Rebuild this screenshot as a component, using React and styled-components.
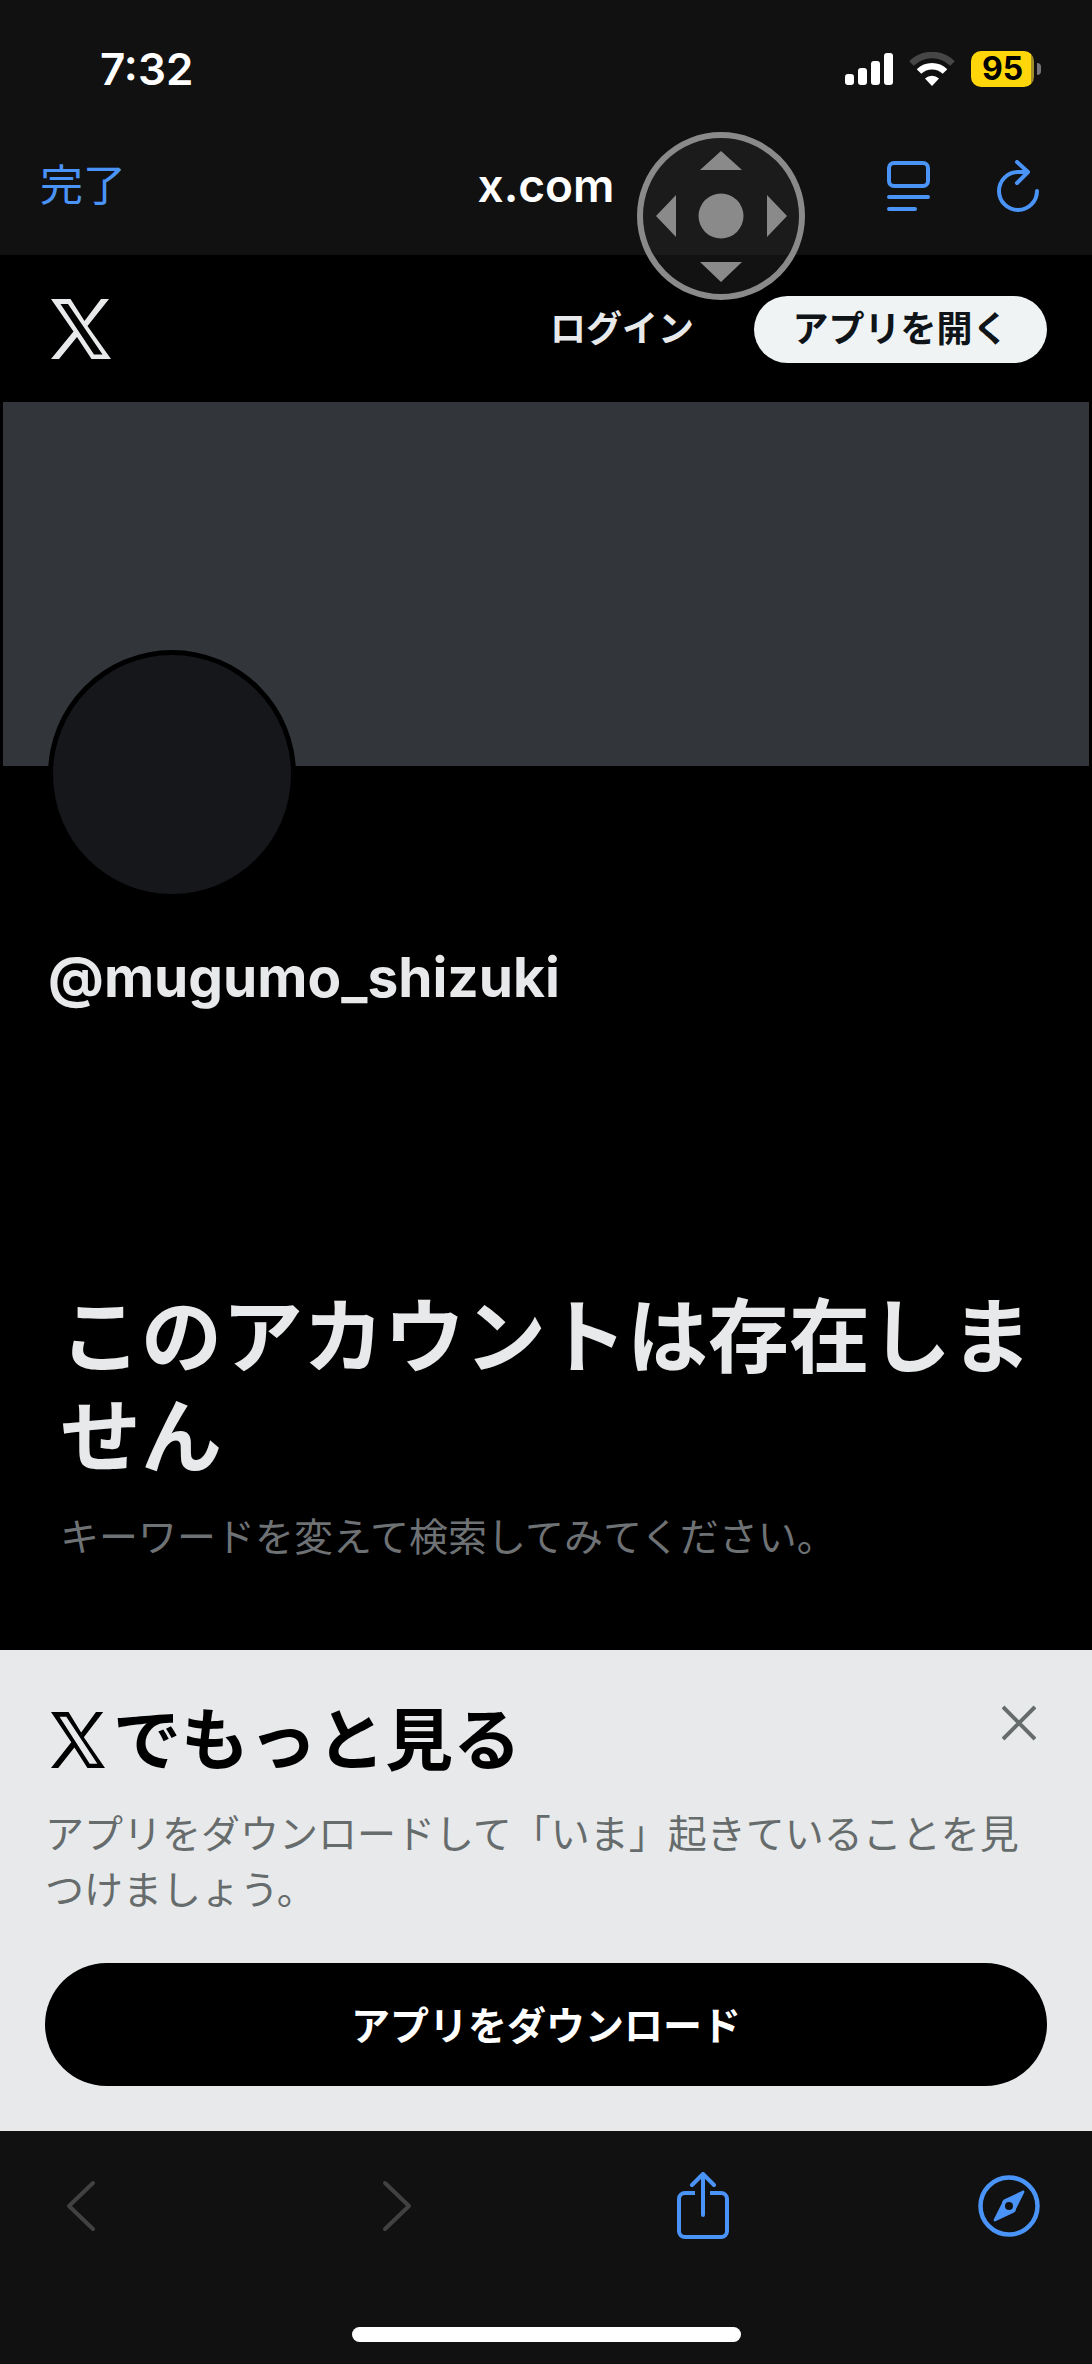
import React from 'react';
import styled, { createGlobalStyle } from 'styled-components';

const GlobalStyle = createGlobalStyle`
  * {
    box-sizing: border-box;
  }

  body {
    margin: 0;
    background: #000;
    font-family: Inter, 'Noto Sans CJK JP', sans-serif;
  }

  button {
    padding: 0;
    border: 0;
    background: none;
    color: inherit;
    font: inherit;
    cursor: pointer;
  }

  h1, h2, p {
    margin: 0;
  }

  svg {
    display: block;
  }
`;

const Screen = styled.div`
  position: relative;
  display: flex;
  flex-direction: column;
  min-height: 100vh;
  background: #000;
  color: #e7e9ea;
`;

// BROWSER TOP
const BrowserTop = styled.div`
  background: #111;
  color: #fff;
`;

const StatusBar = styled.div`
  display: flex;
  align-items: center;
  justify-content: space-between;
  height: 138px;
  padding: 0 51px 0 100px;
`;

const Clock = styled.time`
  font-size: 44px;
  font-weight: 600;
  line-height: 56px;
`;

const StatusIcons = styled.div`
  display: flex;
  align-items: center;
  gap: 16px;
`;

const Battery = styled.div`
  display: flex;
  align-items: center;
  gap: 3px;

  &::after {
    content: '';
    width: 4px;
    height: 12px;
    border-radius: 0 4px 4px 0;
    background: #77777a;
  }
`;

const BatteryLevel = styled.div`
  width: 63px;
  height: 36px;
  border-radius: 10px;
  background: linear-gradient(to right, #ffd60a 96%, #a08d2c 96%);
  color: #000;
  font-size: 32px;
  font-weight: 700;
  line-height: 36px;
  text-align: center;
`;

const AddressBar = styled.div`
  display: grid;
  grid-template-columns: 1fr auto 1fr;
  align-items: center;
  height: 117px;
  padding: 0 40px 24px;
`;

const DoneButton = styled.button`
  justify-self: start;
  color: #4a94f8;
  font-size: 43px;
  line-height: 56px;
`;

const Address = styled.span`
  font-size: 46px;
  font-weight: 600;
  line-height: 56px;
`;

const AddressTools = styled.div`
  display: flex;
  justify-content: flex-end;
  gap: 67px;
  padding: 2px 13px 0 0;
  color: #4a94f8;
`;

const JoystickButton = styled.button`
  position: absolute;
  top: 132px;
  left: 66%;
  transform: translateX(-50%);
`;

// X HEADER
const XHeader = styled.header`
  display: flex;
  align-items: center;
  justify-content: space-between;
  height: 147px;
  padding: 1px 45px 0 51px;
`;

const HeaderActions = styled.div`
  display: flex;
  align-items: center;
  gap: 60px;
  font-size: 36px;
  font-weight: 600;
  line-height: 56px;
`;

const OpenAppButton = styled.button`
  width: 293px;
  height: 67px;
  border-radius: 34px;
  background: #eff3f4;
  color: #0f1419;
`;

// PROFILE
const Banner = styled.div`
  height: 364px;
  margin: 0 3px;
  background: #323539;
`;

const Profile = styled.section`
  padding: 0 48px;
`;

const Avatar = styled.div`
  width: 248px;
  height: 249px;
  margin-top: -116px;
  border: 5px solid #000;
  border-radius: 50%;
  background: #16171a;
`;

const Handle = styled.h1`
  margin-top: 44px;
  font-size: 55px;
  font-weight: 700;
  line-height: 68px;
`;

const EmptyState = styled.section`
  flex: 1;
  padding: 276px 48px 80px 60px;
`;

const EmptyTitle = styled.h2`
  font-size: 81px;
  font-weight: 700;
  line-height: 100px;
`;

const EmptyText = styled.p`
  margin-top: 22px;
  color: #6e7275;
  font-size: 39px;
  line-height: 56px;
`;

// DOWNLOAD SHEET
const Sheet = styled.section`
  padding: 48px 45px 45px;
  background: #e7e9ea;
  color: #000;
`;

const SheetTop = styled.div`
  display: flex;
  align-items: flex-start;
  justify-content: space-between;
  padding: 0 11px 0 6px;
`;

const SheetTitle = styled.h2`
  display: flex;
  align-items: center;
  gap: 8px;
  font-size: 68px;
  font-weight: 600;
  line-height: 84px;
`;

const CloseButton = styled.button`
  margin-top: 7px;
  color: #666b6c;
`;

const SheetText = styled.p`
  margin-top: 24px;
  color: #666b6c;
  font-size: 39px;
  line-height: 56px;
`;

const DownloadButton = styled.button`
  width: 100%;
  height: 123px;
  margin-top: 45px;
  padding-bottom: 4px;
  border-radius: 62px;
  background: #000;
  color: #fff;
  font-size: 39px;
  font-weight: 600;
`;

// BROWSER BOTTOM
const BrowserBottom = styled.nav`
  display: flex;
  flex-direction: column;
  align-items: center;
  justify-content: space-between;
  height: 233px;
  padding: 41px 0 22px;
  background: #111;
`;

const BottomTools = styled.div`
  display: grid;
  grid-template-columns: 31fr 30fr 30fr auto;
  align-items: center;
  width: 100%;
  padding: 0 52px 0 50px;
  color: #4a94f8;
`;

const ToolButton = styled.button`
  display: flex;
  justify-content: center;

  ${BottomTools} & {
    width: 62px;
  }

  &:disabled {
    color: #414141;
    cursor: default;
  }
`;

const HomeIndicator = styled.div`
  width: 389px;
  height: 15px;
  border-radius: 8px;
  background: #fff;
`;

// ICONS
const XLogo = ({ width, height }) => (
  <svg width={width} height={height} viewBox="0 0 60 60" preserveAspectRatio="none" fill="currentColor" aria-label="X" role="img">
    <path fillRule="evenodd" d="M0 0h19.5L33.5 22 50 0h8L36.5 27 60 60H40.5L26 38 8 60H0l22.5-27.5zM9.5 5L43 55.5h8.5L17 5z" />
  </svg>
);

const SignalIcon = () => (
  <svg width="48" height="32" viewBox="0 0 48 32" fill="#fff">
    <rect x="0" y="21" width="9" height="11" rx="3" />
    <rect x="13" y="15" width="9" height="17" rx="3" />
    <rect x="26" y="8" width="9" height="24" rx="3" />
    <rect x="39" y="0" width="9" height="32" rx="3" />
  </svg>
);

const WifiIcon = () => (
  <svg width="46" height="34" viewBox="0 0 46 34" fill="none">
    <path d="M2.5 11.5a29 29 0 0 1 41 0" stroke="#464646" strokeWidth="6.5" />
    <path d="M10 19.5a18.5 18.5 0 0 1 26 0" stroke="#fff" strokeWidth="6.5" />
    <path d="M16 26.5a10 10 0 0 1 14 0L23 34z" fill="#fff" />
  </svg>
);

const ReaderIcon = () => (
  <svg width="44" height="52" viewBox="0 0 44 52" fill="none" stroke="currentColor" strokeWidth="4" strokeLinecap="round">
    <rect x="3" y="3" width="39" height="23" rx="5" />
    <path d="M3 37h39M3 49h26" />
  </svg>
);

const ReloadIcon = () => (
  <svg width="42" height="52" viewBox="0 0 42 52" fill="none" stroke="currentColor" strokeWidth="4" strokeLinecap="round" strokeLinejoin="round">
    <path d="M40 31a19 19 0 1 1-19-19h9" />
    <path d="M20 2l11 10-11 11" />
  </svg>
);

const JoystickIcon = () => (
  <svg width="168" height="168" viewBox="0 0 168 168" fill="#8a8a8a">
    <circle cx="84" cy="84" r="81" fill="#2a2a2a" fillOpacity="0.42" stroke="#8a8a8a" strokeWidth="6" />
    <circle cx="84" cy="84" r="22.5" />
    <path d="M84 19l21 19H63zM84 150l21-20H63zM19 84l20-21v42zM150 84l-20-21v42z" />
  </svg>
);

const CloseIcon = () => (
  <svg width="34" height="36" viewBox="0 0 34 36" fill="none" stroke="currentColor" strokeWidth="4">
    <path d="M1 2l32 32M33 2L1 34" />
  </svg>
);

const ChevronIcon = ({ forward }) => (
  <svg width="30" height="52" viewBox="0 0 30 52" fill="none" stroke="currentColor" strokeWidth="4" strokeLinecap="round" strokeLinejoin="round">
    <path d={forward ? 'M3 3l24 23L3 49' : 'M27 3L3 26l24 23'} />
  </svg>
);

const ShareIcon = () => (
  <svg width="54" height="68" viewBox="0 0 54 68" fill="none" stroke="currentColor" strokeWidth="4" strokeLinecap="round" strokeLinejoin="round">
    <path strokeLinecap="butt" d="M19 21H9a6 6 0 0 0-6 6v32a6 6 0 0 0 6 6h36a6 6 0 0 0 6-6V27a6 6 0 0 0-6-6H34" />
    <path d="M27 43V3M16 13L27 2l11 11" />
  </svg>
);

const SafariIcon = () => (
  <svg width="62" height="62" viewBox="0 0 62 62" fill="none">
    <circle cx="31" cy="31" r="28.5" stroke="currentColor" strokeWidth="4.5" />
    <path
      fill="currentColor"
      fillRule="evenodd"
      d="M44 16c2-1 3 0 2 2L38 34c0 2-1 3-3 4L18 46c-2 1-3 0-2-2l8-16c0-2 1-3 3-4zM31 27a4 4 0 1 0 0 8 4 4 0 0 0 0-8z"
    />
  </svg>
);

const App = () => (
  <>
    <GlobalStyle />
    <Screen lang="ja">
      <BrowserTop>
        <StatusBar>
          <Clock>7:32</Clock>
          <StatusIcons>
            <SignalIcon />
            <WifiIcon />
            <Battery>
              <BatteryLevel>95</BatteryLevel>
            </Battery>
          </StatusIcons>
        </StatusBar>
        <AddressBar>
          <DoneButton>完了</DoneButton>
          <Address>x.com</Address>
          <AddressTools>
            <ToolButton aria-label="リーダー"><ReaderIcon /></ToolButton>
            <ToolButton aria-label="再読み込み"><ReloadIcon /></ToolButton>
          </AddressTools>
        </AddressBar>
      </BrowserTop>

      <XHeader>
        <XLogo width={60} height={60} />
        <HeaderActions>
          <button>ログイン</button>
          <OpenAppButton>アプリを開く</OpenAppButton>
        </HeaderActions>
      </XHeader>

      <Banner />
      <Profile>
        <Avatar />
        <Handle>@mugumo_shizuki</Handle>
      </Profile>

      <EmptyState>
        <EmptyTitle>このアカウントは存在しません</EmptyTitle>
        <EmptyText>キーワードを変えて検索してみてください。</EmptyText>
      </EmptyState>

      <Sheet>
        <SheetTop>
          <SheetTitle>
            <XLogo width={54} height={56} />
            でもっと見る
          </SheetTitle>
          <CloseButton aria-label="閉じる"><CloseIcon /></CloseButton>
        </SheetTop>
        <SheetText>アプリをダウンロードして「いま」起きていることを見つけましょう。</SheetText>
        <DownloadButton>アプリをダウンロード</DownloadButton>
      </Sheet>

      <BrowserBottom>
        <BottomTools>
          <ToolButton disabled aria-label="戻る"><ChevronIcon /></ToolButton>
          <ToolButton disabled aria-label="進む"><ChevronIcon forward /></ToolButton>
          <ToolButton aria-label="共有"><ShareIcon /></ToolButton>
          <ToolButton aria-label="Safariで開く"><SafariIcon /></ToolButton>
        </BottomTools>
        <HomeIndicator />
      </BrowserBottom>

      <JoystickButton aria-label="操作パッド"><JoystickIcon /></JoystickButton>
    </Screen>
  </>
);

export default App;
